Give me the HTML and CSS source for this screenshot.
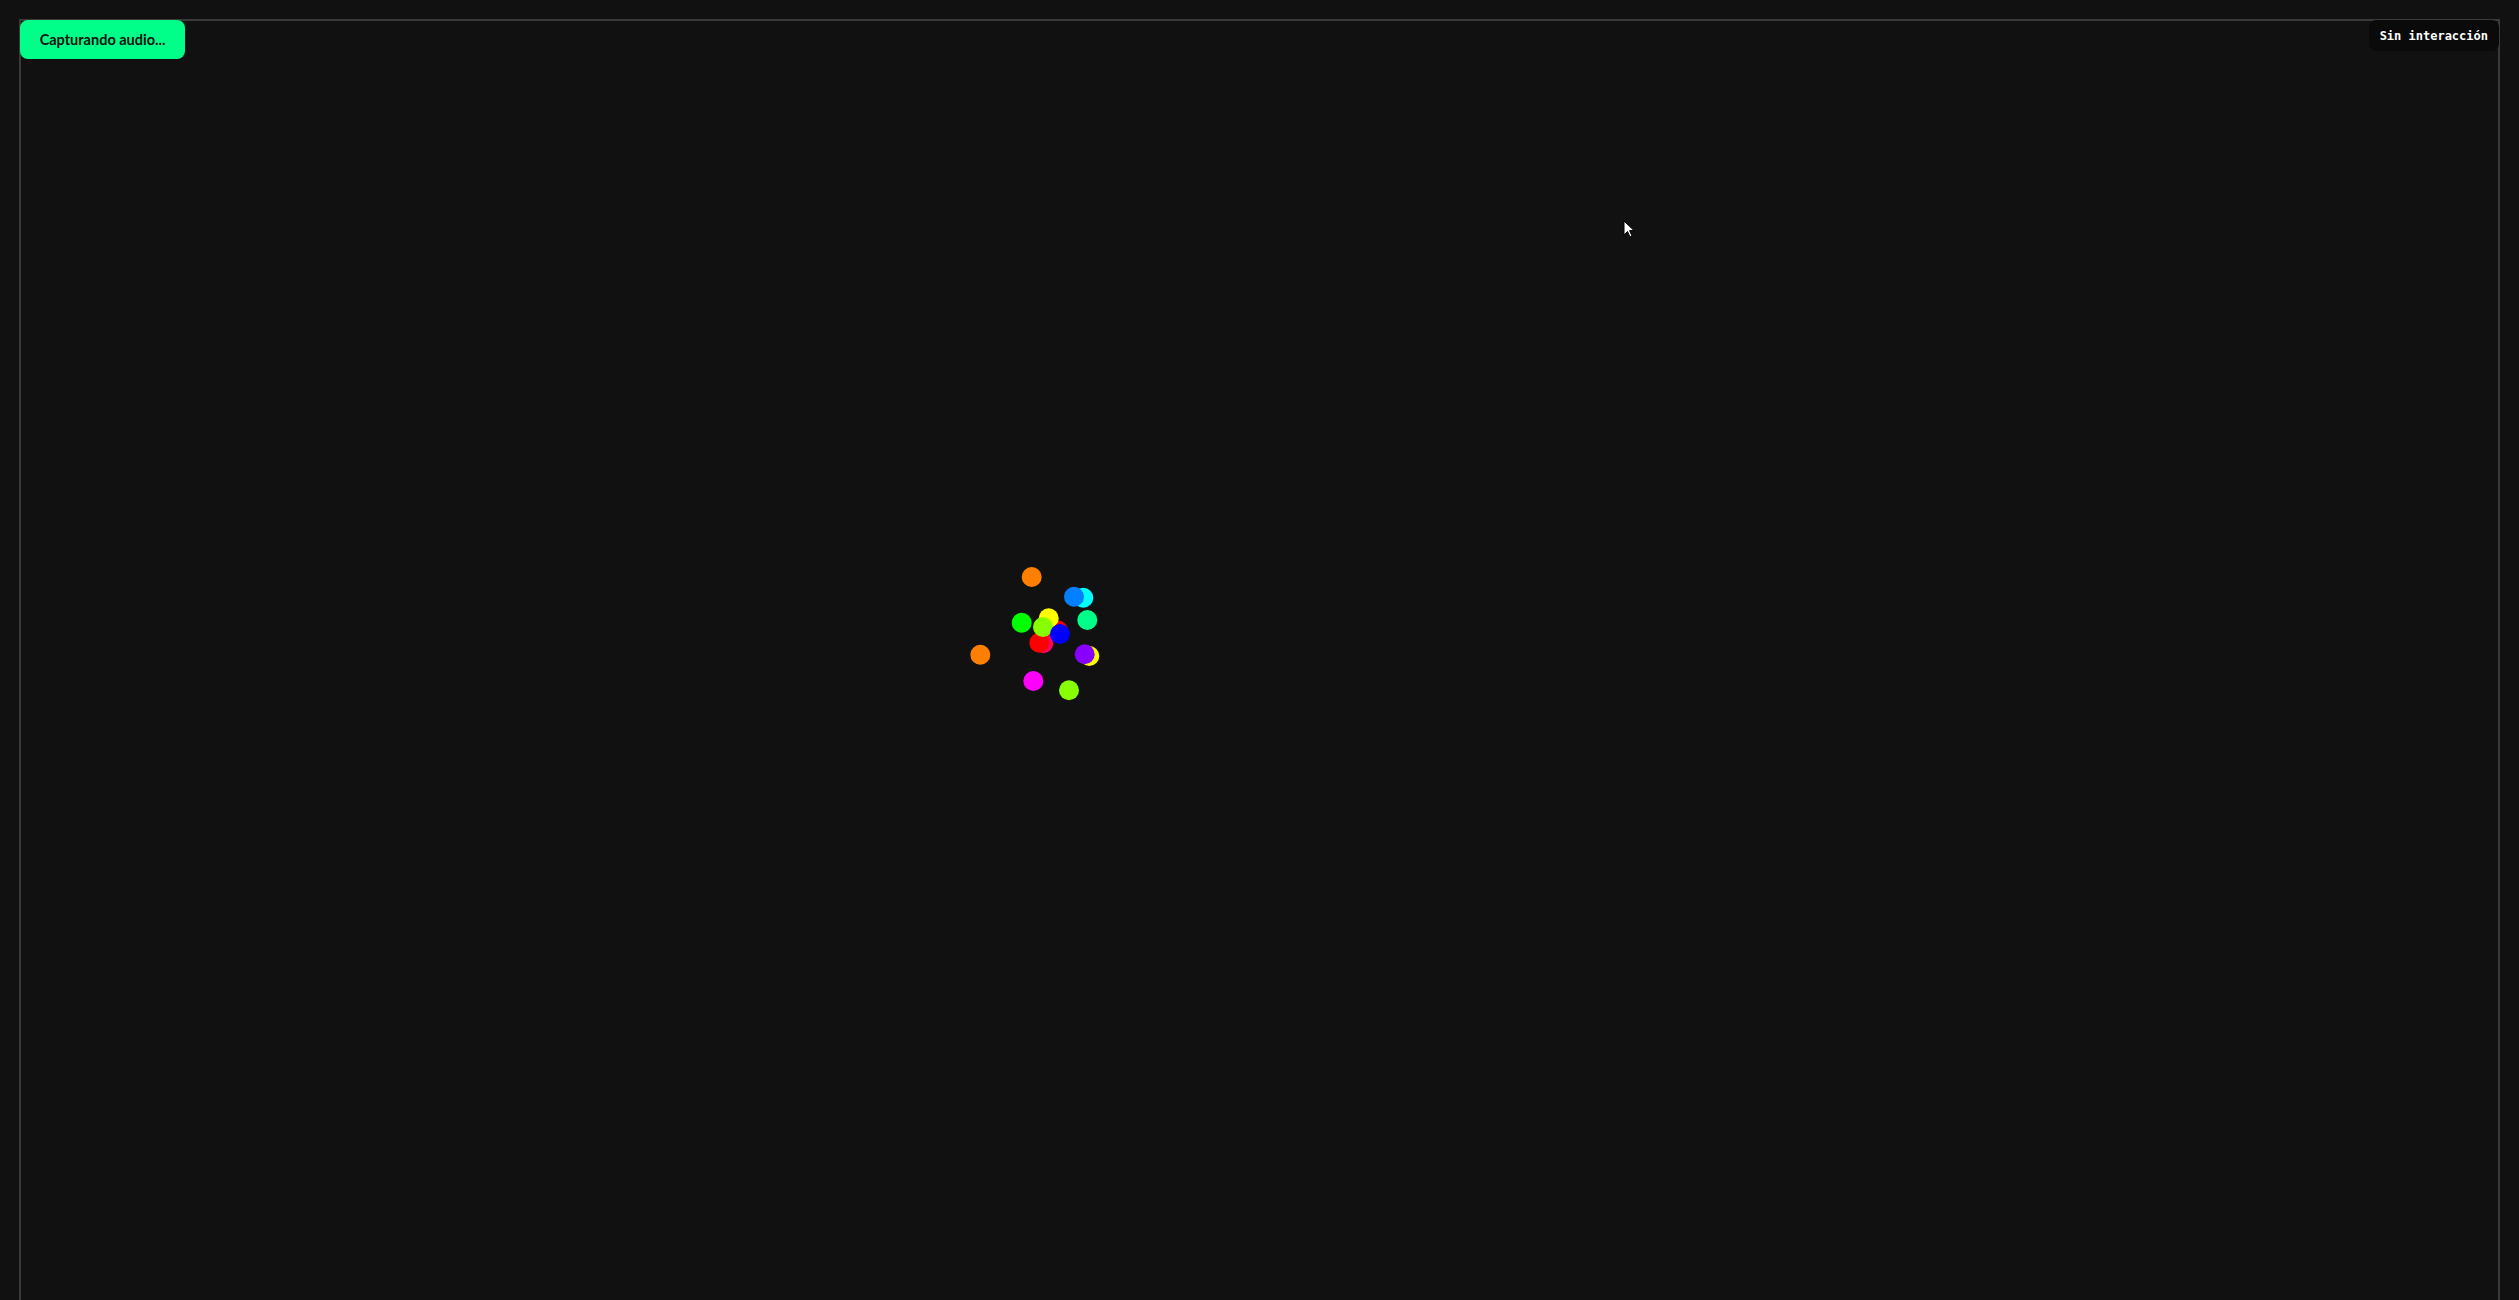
FILE: index.html
```html
<!DOCTYPE html>
<html lang="es">
<head>
<meta charset="utf-8">
<title>Visualizador</title>
<link rel="stylesheet" href="styles.css">
</head>
<body>
<div class="stage">
  <svg class="dots" width="2481" height="1400" viewBox="19 19 2481 1400" xmlns="http://www.w3.org/2000/svg">
    <circle cx="1031.7" cy="577" r="10" fill="#ff8000"/>
    <circle cx="1083.3" cy="597.7" r="10" fill="#00ffff"/>
    <circle cx="1074" cy="596.7" r="10" fill="#0080ff"/>
    <circle cx="1021.7" cy="622.7" r="10" fill="#00ff00"/>
    <circle cx="1087.3" cy="620" r="10" fill="#00ff88"/>
    <circle cx="1058" cy="630.5" r="10" fill="#ff0000"/>
    <circle cx="1048.7" cy="618.3" r="10" fill="#ffff00"/>
    <circle cx="1043.3" cy="643.3" r="10" fill="#ff0066"/>
    <circle cx="1039.3" cy="642.7" r="10" fill="#ff0000"/>
    <circle cx="1043" cy="627" r="10" fill="#88ff00"/>
    <circle cx="1060" cy="634" r="10" fill="#0000ff"/>
    <circle cx="980.3" cy="654.7" r="10" fill="#ff8000"/>
    <circle cx="1089.3" cy="656" r="10" fill="#ffff00"/>
    <circle cx="1084.7" cy="654.3" r="10" fill="#8800ff"/>
    <circle cx="1033.3" cy="681" r="10" fill="#ff00ff"/>
    <circle cx="1069" cy="690.3" r="10" fill="#88ff00"/>
  </svg>
</div>
<button class="status-btn">Capturando audio...</button>
<div class="badge">Sin interacción</div>
<svg class="cursor" width="14" height="20" viewBox="0 0 14 20" xmlns="http://www.w3.org/2000/svg">
  <path d="M1 1 L1 15 L4.5 11.5 L7 17 L9 16 L6.6 10.6 L11 10.6 Z" fill="#ffffff" stroke="#000000" stroke-width="1"/>
</svg>
</body>
</html>
```

FILE: styles.css
```css
html, body {
  margin: 0;
  padding: 0;
  background: #111111;
  overflow: hidden;
  width: 2519px;
  height: 1300px;
}

body {
  padding: 19px;
  box-sizing: border-box;
  font-family: "Liberation Sans", Arial, sans-serif;
}

.stage {
  border: 2px solid #3a3a3a;
  height: 1400px;
  box-sizing: border-box;
  overflow: hidden;
}

.dots {
  display: block;
  margin: -2px;
}

.status-btn {
  position: absolute;
  top: 20px;
  left: 20px;
  width: 165px;
  height: 39px;
  border: none;
  border-radius: 8px;
  background: #00ff88;
  color: #111111;
  font-family: "Lato", "Liberation Sans", sans-serif;
  font-weight: 700;
  font-size: 14.5px;
  padding: 0;
}

.badge {
  position: absolute;
  top: 20px;
  right: 20px;
  height: 31px;
  box-sizing: border-box;
  padding: 0 11px;
  display: flex;
  align-items: center;
  background: #0a0a0a;
  border-radius: 7px;
  color: #ffffff;
  font-family: "DejaVu Sans Mono", "Liberation Mono", monospace;
  font-size: 12px;
  font-weight: 700;
}

.cursor {
  position: absolute;
  left: 1623px;
  top: 220px;
}
```
